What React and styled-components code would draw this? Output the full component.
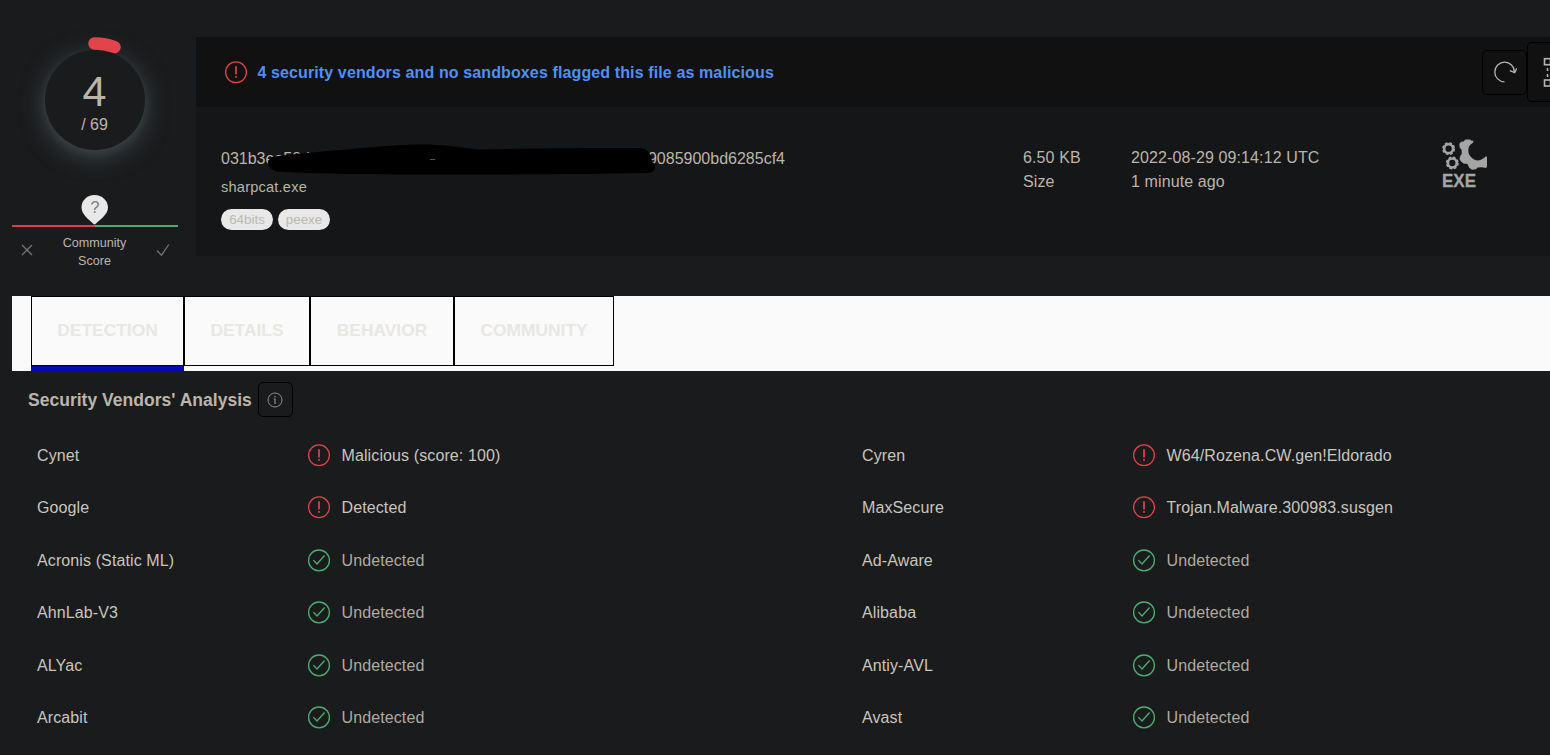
import React from 'react';
import styled, { createGlobalStyle } from 'styled-components';

const GlobalStyle = createGlobalStyle`
  * { box-sizing: border-box; }
  html, body { margin: 0; background: #1a1b1c; overflow: hidden; }
  body {
    font-family: "Liberation Sans", Arial, Helvetica, sans-serif;
    font-size: 16px;
    color: #bab5ab;
  }
`;

const Page = styled.main`
  width: 1550px;
  height: 755px;
  overflow: hidden;
  padding: 37px 0 0 12px;
  background: #1a1b1d;
  border-bottom: 1px solid #161617;
`;

const Summary = styled.section`
  display: flex;
  gap: 18px;
  height: 259px;
`;

const ScoreColumn = styled.aside`
  width: 166px;
  display: flex;
  flex-direction: column;
  align-items: center;
`;

const Gauge = styled.div`
  position: relative;
  width: 100px;
  height: 100px;
  margin-top: 13px;
  border-radius: 50%;
  background: #1a1b1d;
  box-shadow: 0 5px 24px #454f52, 0 3px 8px rgba(80, 92, 96, 0.2);
  display: flex;
  flex-direction: column;
  align-items: center;
`;

const GaugeArc = styled.svg`
  position: absolute;
  left: -15px;
  top: -15px;
`;

const Positives = styled.div`
  font-size: 43px;
  line-height: 48px;
  margin: 17px 1px 0 0;
`;

const Total = styled.div`
  font-size: 16px;
  line-height: 20px;
  margin-right: 1px;
`;

const Community = styled.div`
  margin-top: 45px;
  width: 166px;
`;

const PinRow = styled.div`
  display: flex;
  justify-content: center;
  height: 30px;
`;

const Pin = styled.div`
  position: relative;
  width: 28px;
  height: 30px;
  color: #7a7b7c;
  font-size: 16px;
  line-height: 26px;
  text-align: center;
  svg { position: absolute; left: 0; top: 0; }
  span { position: relative; }
`;

const ScoreBar = styled.div`
  height: 2px;
  background: linear-gradient(90deg, #e33b43 50%, #4aae70 50%);
`;

const Votes = styled.div`
  display: flex;
  justify-content: space-between;
  padding: 7px 8px 0 9px;
  font-size: 12.6px;
  line-height: 18px;
  text-align: center;
  svg { margin-top: 8px; }
`;

const VoteLabel = styled.div`
  width: 70px;
`;

const Card = styled.article`
  width: 1354px;
  height: 219px;
  background: #151618;
`;

const CardHeader = styled.header`
  display: flex;
  align-items: center;
  height: 70px;
  padding-left: 28px;
  background: #111;
`;

const Verdict = styled.strong`
  flex: 1;
  margin-left: 9.4px;
  padding-top: 2px;
  font-size: 16px;
  line-height: 20px;
  letter-spacing: 0.12px;
  color: #508ff8;
`;

const ActionButton = styled.button`
  flex: none;
  width: ${(p) => p.$size}px;
  height: ${(p) => p.$size}px;
  padding: 0;
  display: flex;
  align-items: center;
  justify-content: ${(p) => (p.$start ? 'flex-start' : 'center')};
  padding-left: ${(p) => p.$start || 0}px;
  margin-right: ${(p) => p.$overflow || 0}px;
  background: transparent;
  border: 1px solid #000;
  border-radius: 5px;
`;

const CardBody = styled.div`
  display: flex;
  padding: 32px 0 0 25px;
`;

const FileInfo = styled.div`
  width: 802px;
`;

const Hash = styled.div`
  position: relative;
  display: flex;
  justify-content: space-between;
  width: 564px;
  height: 39px;
  padding-top: 10px;
  line-height: 20px;
`;

const Redaction = styled.svg`
  position: absolute;
  left: 44px;
  top: 0;
`;

const FileName = styled.div`
  font-size: 14.6px;
  line-height: 18px;
  letter-spacing: 0.2px;
`;

const Tags = styled.div`
  display: flex;
  gap: 5px;
  margin-top: 13px;
`;

const Tag = styled.span`
  width: 52px;
  height: 21px;
  border-radius: 11px;
  background: #e8e8e8;
  color: #bdb8ae;
  font-size: 13.4px;
  line-height: 21px;
  text-align: center;
`;

const Meta = styled.div`
  width: ${(p) => p.$width}px;
  padding-top: 7px;
  line-height: 24px;
  letter-spacing: 0.11px;
`;

const FileType = styled.div`
  width: 50px;
`;

const TabBar = styled.nav`
  display: flex;
  height: 75px;
  padding-left: 19px;
  background: #fafafa;
`;

const Tab = styled.button`
  width: ${(p) => p.$width}px;
  height: 75px;
  padding: 0;
  border: 0;
  border-bottom: 5px solid ${(p) => (p.$active ? '#0009b3' : '#f9fbfb')};
  background: transparent;
  font-family: inherit;
`;

const TabLabel = styled.span`
  display: block;
  height: 70px;
  border: 1px solid #000;
  color: #e8e7e3;
  font-size: 17.4px;
  font-weight: bold;
  line-height: 67px;
`;

const Heading = styled.h2`
  display: flex;
  align-items: center;
  gap: 6px;
  height: 35px;
  margin: 11px 0 0 16px;
  font-size: 17.5px;
  line-height: 20px;
  letter-spacing: 0.02px;
`;

const Results = styled.div`
  display: grid;
  grid-template-columns: 825px 825px;
  grid-auto-rows: 52.5px;
  width: 1650px;
  margin-top: 11.7px;
  padding-left: 25px;
`;

const Result = styled.div`
  display: flex;
  align-items: center;
  line-height: 20px;
  letter-spacing: 0.11px;
`;

const Vendor = styled.span`
  width: 270px;
  padding-top: 1.6px;
  color: #c9c5bd;
`;

const Outcome = styled.span`
  margin-left: 10.5px;
  padding-top: 1.6px;
  color: ${(p) => (p.$bad ? '#c9c5bd' : '#b0aaa0')};
`;

function AlertIcon() {
  return (
    <svg width="24" height="24" viewBox="0 -0.3 24 24" fill="none" stroke="#e5404a">
      <circle cx="12" cy="12" r="10.4" strokeWidth="1.3" />
      <path d="M12 6v8.200M12 15.800v1.700" strokeWidth="1.700" />
    </svg>
  );
}

function CheckIcon() {
  return (
    <svg width="24" height="24" viewBox="0 -0.4 24 24" fill="none" stroke="#4aae70">
      <circle cx="12" cy="12" r="10.4" strokeWidth="1.3" />
      <path d="M6.400 11.700l3.600 3.900 7.600-8.500" strokeWidth="1.3" />
    </svg>
  );
}

function RefreshIcon() {
  return (
    <svg width="24" height="24" viewBox="0 0 24 24" fill="none" stroke="#b4b4b2" strokeWidth="1.300">
      <path d="M11.500 21.800A9.800 9.800 0 1 1 21.400 12" />
      <path d="M16.800 10.600l5 2 2-4.400" />
    </svg>
  );
}

function GraphIcon() {
  return (
    <svg width="32" height="32" viewBox="0 0 32 32" fill="none" stroke="#b4b4b2" strokeWidth="1.600">
      <rect x="1.500" y="2.700" width="6" height="6" />
      <rect x="1.500" y="24" width="6" height="6" />
      <rect x="23" y="2.700" width="6" height="6" />
      <rect x="23" y="24" width="6" height="6" />
      <path d="M4.500 12v3M4.500 18v3M26 12v9M11 5.500h9M11 27h9" />
    </svg>
  );
}

function ExeIcon() {
  return (
    <svg width="50" height="54" viewBox="0 0 50 54">
      <g fill="none" stroke="#a5a5a5">
        <circle cx="8.600" cy="9.700" r="4.400" strokeWidth="2.500" />
        <circle cx="8.600" cy="9.700" r="5.700" strokeWidth="1.600" strokeDasharray="2.680 1.800" />
        <circle cx="12.300" cy="24" r="4.400" strokeWidth="2.500" />
        <circle cx="12.300" cy="24" r="5.700" strokeWidth="1.600" strokeDasharray="2.680 1.800" />
      </g>
      <path
        fill="#a5a5a5"
        d="M33 3.700C29.500 5.500 28.300 8 28.300 11C28.300 14 29 16 31 18C33 20.500 35.500 21.500 38 21.400C41 21.300 44 19.500 46 17L47 18.500V27.500L46 29L42 28.300L37.500 28.600L36 30.200L32 30.700L29.200 28.800L27.500 25L23.500 24.500L21 22.500L19.500 20L20.300 17L21.700 15V11L19.600 8.500L19.300 5L21 2.800L23.500 2.600L25.500.4L30 .4L31.500 1.800H33.500Z"
      />
      <text x="2" y="48" textLength="34" lengthAdjust="spacingAndGlyphs" fill="#a5a5a5" stroke="#a5a5a5" strokeWidth=".3" fontSize="18.500" fontWeight="bold">
        EXE
      </text>
    </svg>
  );
}

const tabs = [
  ['DETECTION', 153],
  ['DETAILS', 126],
  ['BEHAVIOR', 144],
  ['COMMUNITY', 160],
];

const results = [
  ['Cynet', 'Malicious (score: 100)', true],
  ['Cyren', 'W64/Rozena.CW.gen!Eldorado', true],
  ['Google', 'Detected', true],
  ['MaxSecure', 'Trojan.Malware.300983.susgen', true],
  ['Acronis (Static ML)', 'Undetected'],
  ['Ad-Aware', 'Undetected'],
  ['AhnLab-V3', 'Undetected'],
  ['Alibaba', 'Undetected'],
  ['ALYac', 'Undetected'],
  ['Antiy-AVL', 'Undetected'],
  ['Arcabit', 'Undetected'],
  ['Avast', 'Undetected'],
];

export default function App() {
  return (
    <>
      <GlobalStyle />
      <Page>
        <Summary>
          <ScoreColumn>
            <Gauge>
              <GaugeArc width="130" height="130" viewBox="0 0 130 130" fill="none">
                <path d="M64.500 8.500A56.500 56.500 0 0 1 84.500 12" stroke="#e2434d" strokeWidth="12.500" strokeLinecap="round" />
              </GaugeArc>
              <Positives>4</Positives>
              <Total>/ 69</Total>
            </Gauge>
            <Community>
              <PinRow>
                <Pin>
                  <svg width="28" height="30" viewBox="0 0 28 30">
                    <path fill="#e8e8e8" d="M13.500 0C6 0 .5 5.500.5 12.500c0 7 7.500 12 12 16.500q1 .8 2 0c4.500-4.500 12.500-9.500 12.500-16.500C27 5.500 21 0 13.500 0z" />
                  </svg>
                  <span>?</span>
                </Pin>
              </PinRow>
              <ScoreBar />
              <Votes>
                <svg width="12" height="16" viewBox="0 0 12 16" stroke="#77797a" strokeWidth="1.2">
                  <path d="M1 3l10 10M11 3L1 13" />
                </svg>
                <VoteLabel>Community Score</VoteLabel>
                <svg width="14" height="16" viewBox="0 0 14 16" fill="none" stroke="#77797a" strokeWidth="1.2">
                  <path d="M.8 8.500l4.700 4.700L12.800 2.500" />
                </svg>
              </Votes>
            </Community>
          </ScoreColumn>
          <Card>
            <CardHeader>
              <AlertIcon />
              <Verdict>4 security vendors and no sandboxes flagged this file as malicious</Verdict>
              <ActionButton $size={45}>
                <RefreshIcon />
              </ActionButton>
              <ActionButton $size={60} $start={15} $overflow={-37}>
                <GraphIcon />
              </ActionButton>
            </CardHeader>
            <CardBody>
              <FileInfo>
                <Hash>
                  <span>031b3ea58d</span>
                  <span>9085900bd6285cf4</span>
                  <Redaction width="394" height="40" viewBox="0 0 394 40">
                    <path d="M10 17.500C25 15.500 40 14 58 12.500C95 9.500 125 5.500 158 5.500C185 5.500 200 9.500 215 10.500C280 9 340 9 374 9Q382 9 385 15Q388 19 386 23Q391 24 390 28Q389 34 382 34C330 35 270 35.500 190 35.500C130 35.500 60 35.500 12 32.500Q3 30 3 23.500Q4 18 10 17.500Z" />
                    <path d="M165 20.500h5" stroke="#555" strokeWidth="1" />
                  </Redaction>
                </Hash>
                <FileName>sharpcat.exe</FileName>
                <Tags>
                  <Tag>64bits</Tag>
                  <Tag>peexe</Tag>
                </Tags>
              </FileInfo>
              <Meta $width={108}>
                <div>6.50 KB</div>
                <div>Size</div>
              </Meta>
              <Meta $width={309}>
                <div>2022-08-29 09:14:12 UTC</div>
                <div>1 minute ago</div>
              </Meta>
              <FileType>
                <ExeIcon />
              </FileType>
            </CardBody>
          </Card>
        </Summary>
        <TabBar>
          {tabs.map(([label, width], i) => (
            <Tab key={label} $width={width} $active={i === 0}>
              <TabLabel>{label}</TabLabel>
            </Tab>
          ))}
        </TabBar>
        <Heading>
          Security Vendors' Analysis
          <ActionButton $size={35}>
            <svg width="16" height="16" viewBox="0 0 16 16" fill="none" stroke="#8d8c89" strokeWidth="1">
              <circle cx="8" cy="8" r="7" />
              <path d="M8 4v1.500M6.800 7H8v5" strokeWidth="1.200" />
            </svg>
          </ActionButton>
        </Heading>
        <Results>
          {results.map(([vendor, outcome, bad]) => (
            <Result key={vendor}>
              <Vendor>{vendor}</Vendor>
              {bad ? <AlertIcon /> : <CheckIcon />}
              <Outcome $bad={bad}>{outcome}</Outcome>
            </Result>
          ))}
        </Results>
      </Page>
    </>
  );
}
